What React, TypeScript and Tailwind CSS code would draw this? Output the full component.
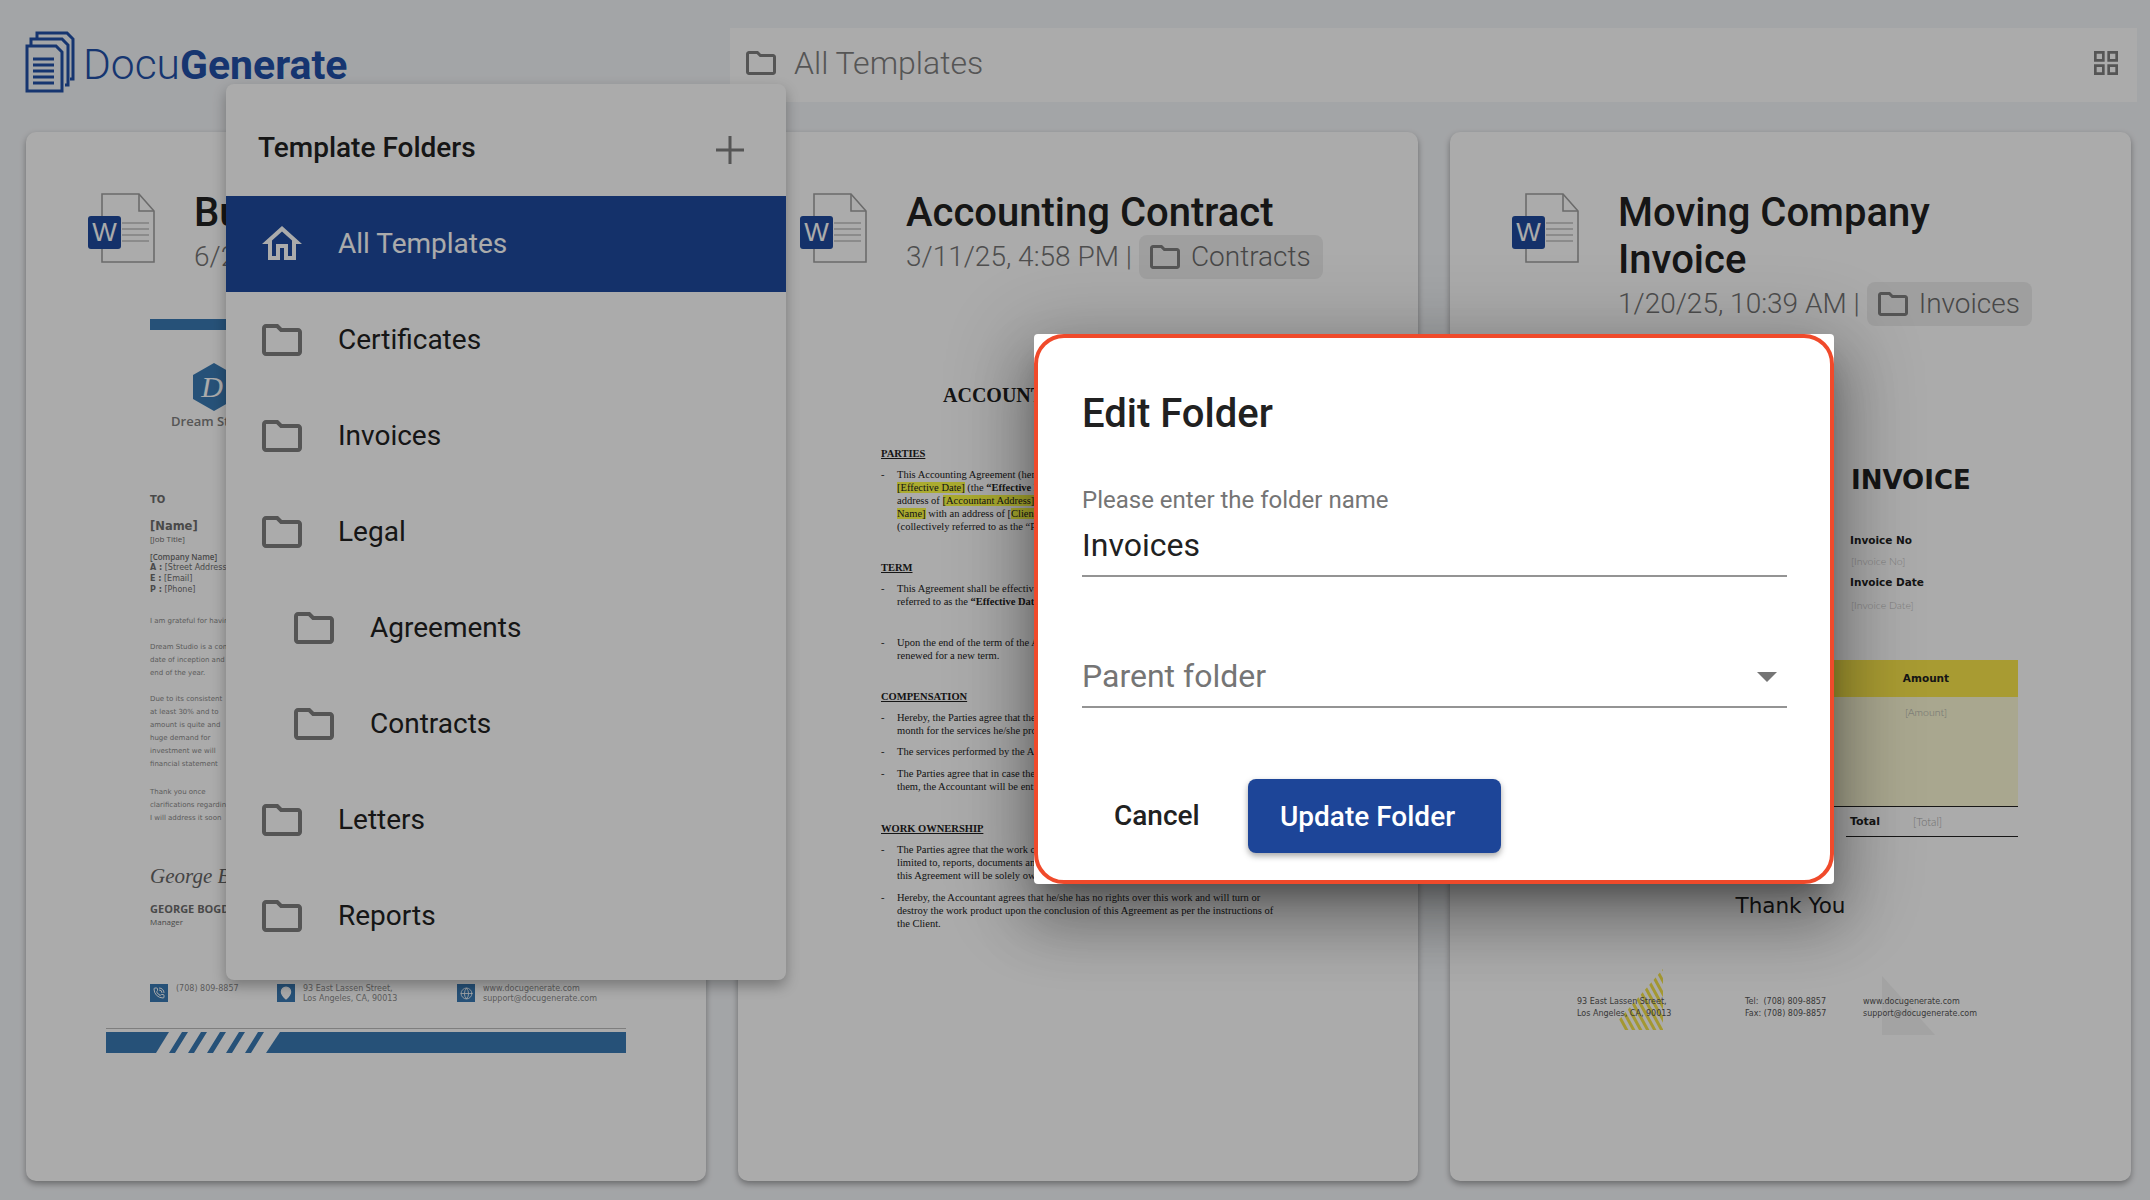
import React from 'react';
import { Globe, MapPin, PhoneCall } from 'lucide-react';

const FOLDER_PATH = 'M9.17 6l2 2H20v10H4V6h5.17M10 4H4c-1.1 0-1.99.9-1.99 2L2 18c0 1.1.9 2 2 2h16c1.1 0 2-.9 2-2V8c0-1.1-.9-2-2-2h-8l-2-2z';
const HOME_PATH = 'M12 5.69l5 4.5V18h-2v-6H9v6H7v-7.81l5-4.5M12 3L2 12h3v8h6v-6h2v6h6v-8h3L12 3z';
const GRID_PATH = 'M3 3v8h8V3H3zm6 6H5V5h4v4zm-6 4v8h8v-8H3zm6 6H5v-4h4v4zm4-16v8h8V3h-8zm6 6h-4V5h4v4zm-6 4v8h8v-8h-8zm6 6h-4v-4h4v4z';

const FOLDERS = [
  { name: 'Certificates', indent: false },
  { name: 'Invoices', indent: false },
  { name: 'Legal', indent: false },
  { name: 'Agreements', indent: true },
  { name: 'Contracts', indent: true },
  { name: 'Letters', indent: false },
  { name: 'Reports', indent: false },
];

function MuiIcon({ d, className }: { d: string; className: string }) {
  return (
    <svg viewBox="0 0 24 24" className={className} fill="currentColor">
      <path d={d} />
    </svg>
  );
}

function Logo() {
  return (
    <svg width="50" height="62" viewBox="0 0 50 62" fill="none" stroke="#2150a8" strokeWidth="3" className="shrink-0">
      <path d="M12 8V2h30l6 6v40h-3" />
      <path d="M6 14V8h31l6 6v40h-3" />
      <path d="M2 15h29l6 6v39H2z" fill="#f4f6f9" />
      <path d="M8 28h21M8 34h21M8 40h21M8 46h21M8 52h21" />
    </svg>
  );
}

function WordIcon() {
  return (
    <svg width="67" height="70" viewBox="0 0 67 70" className="shrink-0 mt-1">
      <path d="M14 1h37l15 17v51H14z" fill="#ffffff" stroke="#a0a0a0" strokeWidth="1.6" />
      <path d="M51 1v17h15" fill="none" stroke="#a0a0a0" strokeWidth="1.6" />
      <path d="M34 30h27M34 36h27M34 42h27M34 48h27" stroke="#d0d0d0" strokeWidth="2" />
      <rect x="0" y="23" width="33" height="33" rx="3" fill="#1e4a9e" />
      <text x="16.5" y="48" textAnchor="middle" fontFamily="Liberation Sans" fontWeight="400" fontSize="26" fill="#ffffff">W</text>
    </svg>
  );
}

function CardHeader({ title, date, folder }: { title: string; date: string; folder: string }) {
  return (
    <div className="flex pl-[62px] pr-4 pt-[57px] gap-[39px] h-auto">
      <WordIcon />
      <div className="min-w-0">
        <h2 className="max-w-[440px] -mb-[1px] text-[40px] leading-[47px] font-medium text-[#212121]">{title}</h2>
        <div className="flex items-center h-[44px] text-[28px] font-light text-[#757575]">
          <span className="whitespace-nowrap">{date} |</span>
          <span className="ml-[7px] flex items-center h-[44px] pl-2 pr-3 rounded-lg bg-[#eeeeee] text-[#6b6b6b] whitespace-nowrap">
            <MuiIcon d={FOLDER_PATH} className="w-9 h-9 mr-2 text-[#7f7f7f]" />
            {folder}
          </span>
        </div>
      </div>
    </div>
  );
}

function BusinessLetter() {
  return (
    <div className="mt-[21px] ml-[80px] w-[520px] font-['Open_Sans',sans-serif] text-[#808080]">
      <div className="h-[19px]" />
      <div className="ml-[44px] w-[432px] h-[11px] bg-[#3a7ab4]" />
      <div className="mt-[33px] ml-[87px] w-[42px] h-[48px]">
        <svg width="42" height="48" viewBox="0 0 42 48">
          <path d="M21 0l21 12v24L21 48 0 36V12z" fill="#3a7ab4" />
          <text x="19" y="34" textAnchor="middle" fontFamily="Liberation Serif" fontStyle="italic" fontSize="30" fill="#ffffff">D</text>
        </svg>
      </div>
      <div className="ml-[65px] mt-[2px] text-[13px] leading-[16px] font-semibold whitespace-nowrap">Dream Studio</div>
      <div className="ml-[44px] font-['DejaVu_Sans',sans-serif] text-[#6e6e6e]">
        <div className="mt-[65px] text-[10px] leading-[12px] font-bold">TO</div>
        <div className="mt-[13px] text-[11.5px] leading-[14px] font-bold">[Name]</div>
        <div className="text-[8px] leading-[11px] font-['Open_Sans',sans-serif]">[Job Title]</div>
        <div className="mt-[7px] text-[8px] leading-[11px] font-semibold font-['Open_Sans',sans-serif]">[Company Name]</div>
        <div className="text-[8px] leading-[11px]"><b>A :</b> [Street Address]</div>
        <div className="text-[8px] leading-[11px]"><b>E :</b> [Email]</div>
        <div className="text-[8px] leading-[11px]"><b>P :</b> [Phone]</div>
        <div className="text-[7px] leading-[13px] text-[#8a8a8a]">
          <p className="mt-[20px]">I am grateful for having you</p>
          <p className="mt-[13px]">Dream Studio is a company</p>
          <p>date of inception and</p>
          <p>end of the year.</p>
          <p className="mt-[13px]">Due to its consistent</p>
          <p>at least 30% and to</p>
          <p>amount is quite and</p>
          <p>huge demand for</p>
          <p>investment we will</p>
          <p>financial statement</p>
          <p className="mt-[15px]">Thank you once</p>
          <p>clarifications regarding</p>
          <p>I will address it soon</p>
        </div>
        <div className="mt-[37px] h-[28px] text-[21px] leading-[28px] italic font-['Liberation_Serif',serif] text-[#666666] whitespace-nowrap">George Bogdan</div>
        <div className="mt-[12px] text-[11px] leading-[14px] font-bold font-['Open_Sans',sans-serif] whitespace-nowrap">GEORGE BOGDAN</div>
        <div className="text-[8px] leading-[11px] font-['Open_Sans',sans-serif]">Manager</div>
      </div>
      <div className="mt-[57px] ml-[44px] flex text-[8px] leading-[10px] text-[#8a8a8a] font-['DejaVu_Sans',sans-serif]">
        <div className="w-[127px] flex gap-2">
          <span className="w-[18px] h-[18px] bg-[#3a7ab4] flex items-center justify-center text-white">
            <PhoneCall size={12} />
          </span>
          <span className="whitespace-nowrap">(708) 809-8857</span>
        </div>
        <div className="w-[180px] flex gap-2">
          <span className="w-[18px] h-[18px] bg-[#3a7ab4] flex items-center justify-center text-white">
            <MapPin size={14} fill="#ffffff" stroke="#ffffff" />
          </span>
          <span className="whitespace-nowrap">93 East Lassen Street,<br />Los Angeles, CA, 90013</span>
        </div>
        <div className="flex gap-2">
          <span className="w-[18px] h-[18px] bg-[#3a7ab4] flex items-center justify-center text-white">
            <Globe size={13} strokeWidth={1.5} />
          </span>
          <span className="whitespace-nowrap">www.docugenerate.com<br />support@docugenerate.com</span>
        </div>
      </div>
      <div className="mt-[24px] h-px bg-[#bdbdbd]" />
      <svg width="520" height="21" viewBox="0 0 520 21" className="mt-[3px] block">
        <rect width="520" height="21" fill="#3a7ab4" />
        <path d="M63 0h111l-14 21H50z" fill="#ffffff" />
        <path d="M76 0h6l-13 21h-6zM95 0h6l-13 21h-6zM114 0h6l-13 21h-6zM133 0h6l-13 21h-6zM152 0h6l-13 21h-6z" fill="#3a7ab4" />
      </svg>
    </div>
  );
}

function ContractHeading({ children, mt }: { children: string; mt: string }) {
  return <div className={`${mt} ml-[143px] text-[10.5px] leading-[14px] font-bold underline`}>{children}</div>;
}

function ContractLine({ dash, mb, children }: { dash?: boolean; mb?: string; children: React.ReactNode }) {
  return (
    <div className={`flex ml-[143px] leading-[13px] whitespace-nowrap ${mb ?? ''}`}>
      <span className="w-[16px]">{dash ? '-' : ''}</span>
      <span>{children}</span>
    </div>
  );
}

function Mark({ children }: { children: string }) {
  return <span className="bg-[#ffff47]">{children}</span>;
}

function AccountingDoc() {
  return (
    <div className="mt-[21px] font-['Liberation_Serif',serif] text-[10.5px] text-[#212121] overflow-hidden">
      <div className="mt-[83px] ml-[205px] text-[20px] leading-[24px] font-bold whitespace-nowrap">ACCOUNTING AGREEMENT</div>
      <ContractHeading mt="mt-[40px]">PARTIES</ContractHeading>
      <div className="mt-[7px]">
        <ContractLine dash>This Accounting Agreement (hereinafter referred to as the “Agreement”) is entered into on</ContractLine>
        <ContractLine><Mark>[Effective Date]</Mark> (the <b>“Effective Date”</b>), by and between [Accountant Name], with an</ContractLine>
        <ContractLine>address of <Mark>[Accountant Address]</Mark>, and [Client Name]</ContractLine>
        <ContractLine><Mark>Name]</Mark> with an address of [<Mark>Client Address</Mark>]</ContractLine>
        <ContractLine>(collectively referred to as the “Parties”).</ContractLine>
      </div>
      <ContractHeading mt="mt-[28px]">TERM</ContractHeading>
      <div className="mt-[7px]">
        <ContractLine dash>This Agreement shall be effective on the date of signing this Agreement (hereinafter</ContractLine>
        <ContractLine>referred to as the <b>“Effective Date”</b>) and will end on [End Date].</ContractLine>
      </div>
      <div className="mt-[28px]">
        <ContractLine dash>Upon the end of the term of the Agreement, this Agreement will not be</ContractLine>
        <ContractLine>renewed for a new term.</ContractLine>
      </div>
      <ContractHeading mt="mt-[28px]">COMPENSATION</ContractHeading>
      <div className="mt-[7px]">
        <ContractLine dash>Hereby, the Parties agree that the Accountant will be paid a fixed sum per</ContractLine>
        <ContractLine mb="mb-[8px]">month for the services he/she provides.</ContractLine>
        <ContractLine dash mb="mb-[9px]">The services performed by the Accountant will be paid monthly.</ContractLine>
        <ContractLine dash>The Parties agree that in case the Client fails to pay between</ContractLine>
        <ContractLine>them, the Accountant will be entitled to interest.</ContractLine>
      </div>
      <ContractHeading mt="mt-[29px]">WORK OWNERSHIP</ContractHeading>
      <div className="mt-[7px]">
        <ContractLine dash>The Parties agree that the work created under this Agreement, including but not</ContractLine>
        <ContractLine>limited to, reports, documents and other materials created during the term of</ContractLine>
        <ContractLine mb="mb-[9px]">this Agreement will be solely owned by the Client.</ContractLine>
        <ContractLine dash>Hereby, the Accountant agrees that he/she has no rights over this work and will turn or</ContractLine>
        <ContractLine>destroy the work product upon the conclusion of this Agreement as per the instructions of</ContractLine>
        <ContractLine>the Client.</ContractLine>
      </div>
    </div>
  );
}

function InvoiceDoc() {
  return (
    <div className="pt-[21px] font-['DejaVu_Sans',sans-serif] text-[#212121]">
      <div className="ml-[401px] mt-[118px] text-[26px] leading-[30px] font-bold">INVOICE</div>
      <div className="ml-[400px] mt-[38px] text-[10.5px] leading-[14px] font-bold">Invoice No</div>
      <div className="ml-[401px] mt-[7px] text-[10.5px] leading-[14px] font-light text-[#bdbdbd] font-['Lato',sans-serif]">[Invoice No]</div>
      <div className="ml-[400px] mt-[7px] text-[10.5px] leading-[14px] font-bold">Invoice Date</div>
      <div className="ml-[401px] mt-[9px] text-[10.5px] leading-[14px] font-light text-[#bdbdbd] font-['Lato',sans-serif]">[Invoice Date]</div>
      <div className="ml-[100px] w-[468px] mt-[48px] h-[37px] bg-[#fbe74b] flex justify-end items-center">
        <span className="w-[184px] text-center text-[10.5px] font-bold">Amount</span>
      </div>
      <div className="ml-[100px] w-[468px] h-[110px] bg-[#fcfad5] border-b border-[#212121] flex justify-end">
        <span className="w-[184px] pt-[8px] text-center text-[10.5px] leading-[14px] font-light text-[#a8a8a8] font-['Lato',sans-serif]">[Amount]</span>
      </div>
      <div className="ml-[396px] w-[172px] h-[30px] pt-[2px] border-b border-[#212121] flex items-center text-[11px]">
        <b className="ml-[4px] w-[63px]">Total</b>
        <span className="font-light text-[#a8a8a8] font-['Lato',sans-serif]">[Total]</span>
      </div>
      <div className="mt-[55px] text-center text-[21.5px] leading-[28px]">Thank You</div>
      <div className="relative mt-[76px] ml-[127px] flex text-[8px] leading-[12px] text-[#555555]">
        <svg width="53" height="61" viewBox="0 0 53 61" className="absolute left-[33px] top-[-27px]">
          <defs>
            <clipPath id="corner-clip"><path d="M53 0v61H0z" /></clipPath>
          </defs>
          <g clipPath="url(#corner-clip)" stroke="#f5e34a" strokeWidth="3">
            {[0, 7, 14, 21, 28, 35, 42, 49, 56, 63, 70].map((o) => (
              <path key={o} d={`M${o - 20} -6L${o + 20} 67`} />
            ))}
          </g>
        </svg>
        <svg width="53" height="59" viewBox="0 0 53 59" className="absolute left-[305px] top-[-20px]">
          <path d="M0 0l53 59H0z" fill="#f3f3f3" />
        </svg>
        <div className="relative w-[168px] whitespace-nowrap">93 East Lassen Street,<br />Los Angeles, CA, 90013</div>
        <div className="relative w-[118px] whitespace-nowrap">Tel:&nbsp; (708) 809-8857<br />Fax: (708) 809-8857</div>
        <div className="relative whitespace-nowrap">www.docugenerate.com<br />support@docugenerate.com</div>
      </div>
    </div>
  );
}

function Card({ children }: { children: React.ReactNode }) {
  return <div className="bg-white rounded-[10px] shadow-[0_3px_6px_rgba(0,0,0,0.35)] overflow-hidden">{children}</div>;
}

function FolderMenu() {
  return (
    <div className="absolute left-[226px] top-[84px] w-[560px] pb-4 bg-white rounded-lg shadow-[0_6px_14px_rgba(0,0,0,0.3)] text-[#212121]">
      <div className="h-[112px] pl-8 pr-[42px] pt-4 flex items-center justify-between">
        <h3 className="text-[28px] font-medium">Template Folders</h3>
        <svg viewBox="0 0 28 28" className="w-7 h-7 mt-1 text-[#7f7f7f]" fill="currentColor">
          <path d="M12.5 0h3v12.5H28v3H15.5V28h-3V15.5H0v-3h12.5z" />
        </svg>
      </div>
      <div className="h-[96px] bg-[#1e4a9e] text-white flex items-center pl-8">
        <MuiIcon d={HOME_PATH} className="w-12 h-12" />
        <span className="ml-8 text-[28px]">All Templates</span>
      </div>
      {FOLDERS.map((folder) => (
        <div key={folder.name} className={`h-[96px] flex items-center ${folder.indent ? 'pl-16' : 'pl-8'}`}>
          <MuiIcon d={FOLDER_PATH} className="w-12 h-12 text-[#7f7f7f]" />
          <span className="ml-8 text-[28px]">{folder.name}</span>
        </div>
      ))}
    </div>
  );
}

function EditFolderDialog() {
  return (
    <div className="absolute left-[1034px] top-[334px] w-[800px] h-[550px] bg-white rounded-[4px] shadow-[0_18px_24px_-10px_rgba(0,0,0,0.3),0_36px_56px_6px_rgba(0,0,0,0.22),0_14px_80px_16px_rgba(0,0,0,0.2)]">
      <div className="h-full rounded-[30px] border-[4px] border-[#f04a2b] pl-[44px] pr-[43px] pt-[52px] text-[#212121]">
        <h2 className="text-[40px] leading-[48px] font-medium">Edit Folder</h2>
        <label className="block mt-[48px] text-[24px] leading-[28px] text-[#757575]">Please enter the folder name</label>
        <input
          defaultValue="Invoices"
          className="block w-full mt-[12px] pb-[11px] h-[51px] text-[32px] leading-[40px] border-b-2 border-[#949494] outline-none"
        />
        <div className="mt-[78px] h-[53px] pb-[9px] flex items-center justify-between border-b-2 border-[#949494]">
          <span className="text-[32px] leading-[40px] text-[#757575]">Parent folder</span>
          <svg viewBox="0 0 24 24" className="w-12 h-12 -mr-[4px] text-[#757575]" fill="currentColor">
            <path d="M7 10l5 5 5-5z" />
          </svg>
        </div>
        <div className="mt-[71px] flex items-center">
          <button className="ml-[32px] w-[134px] text-left text-[28px] font-medium">Cancel</button>
          <button className="h-[74px] w-[253px] pl-8 pt-[2px] text-left rounded-lg bg-[#1d4598] text-white text-[28px] font-medium shadow-[0_3px_6px_rgba(0,0,0,0.35)]">
            Update Folder
          </button>
        </div>
      </div>
    </div>
  );
}

export default function App() {
  return (
    <div className="relative w-[2150px] h-[1200px] overflow-hidden bg-[#f4f6f9] font-[Roboto,sans-serif]">
      {/* Top bar */}
      <div className="flex items-start pt-[28px] pl-[25px] pr-[13px] h-[132px]">
        <div className="w-[705px] flex items-center gap-[8px]">
          <Logo />
          <span className="text-[42.5px] text-[#2150a8] font-light mt-[5px]">Docu<span className="text-[41px] font-bold">Generate</span></span>
        </div>
        <div className="flex-1 h-[74px] bg-white flex items-center pl-[13px] pr-[15px] pb-[5px] text-[#7f7f7f]">
          <MuiIcon d={FOLDER_PATH} className="w-9 h-9" />
          <span className="ml-[15px] text-[32px] font-light">All Templates</span>
          <MuiIcon d={GRID_PATH} className="ml-auto w-[32px] h-[32px]" />
        </div>
      </div>

      {/* Template cards */}
      <div className="grid grid-cols-[680px_680px_681px] gap-x-8 pl-[26px] h-[1049px]">
        <Card>
          <CardHeader title="Business Letter" date="6/2/25, 3:12 PM" folder="Letters" />
          <BusinessLetter />
        </Card>
        <Card>
          <CardHeader title="Accounting Contract" date="3/11/25, 4:58 PM" folder="Contracts" />
          <AccountingDoc />
        </Card>
        <Card>
          <CardHeader title="Moving Company Invoice" date="1/20/25, 10:39 AM" folder="Invoices" />
          <InvoiceDoc />
        </Card>
      </div>

      <FolderMenu />

      {/* Dialog backdrop */}
      <div className="absolute inset-0 bg-black/33" />
      <EditFolderDialog />
    </div>
  );
}
